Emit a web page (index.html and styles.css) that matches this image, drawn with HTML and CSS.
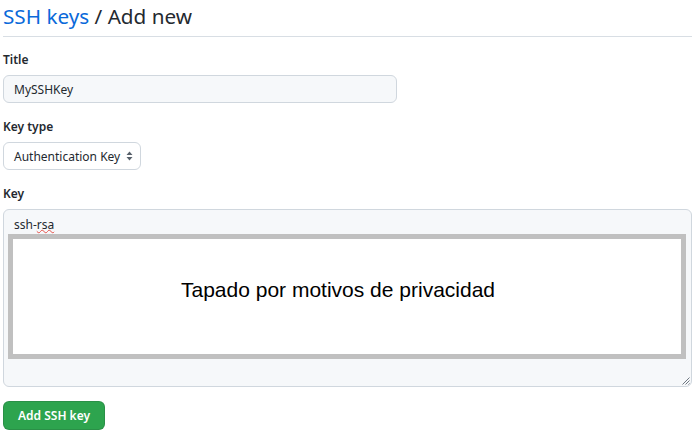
FILE: index.html
```html
<!DOCTYPE html>
<html lang="es">
<head>
<meta charset="utf-8">
<title>SSH keys / Add new</title>
<link rel="stylesheet" href="styles.css">
</head>
<body>
<div class="page">
  <h1 class="heading"><a class="crumb" href="#">SSH keys</a> / Add new</h1>
  <form class="form">
    <div class="group">
      <label class="label">Title</label>
      <div class="input">MySSHKey</div>
    </div>
    <div class="group">
      <label class="label">Key type</label>
      <div class="select">
        <span>Authentication Key</span>
        <svg class="arrows" width="7" height="10" viewBox="0 0 7 10"><path d="M3.5 0.5 L6.5 4 H0.5 Z M3.5 9.5 L6.5 6 H0.5 Z" fill="#57606a"/></svg>
      </div>
    </div>
    <div class="group">
      <label class="label">Key</label>
      <div class="textarea">
        <div class="ta-text">ssh-<span class="typo">rsa</span></div>
        <div class="cover"><span>Tapado por motivos de privacidad</span></div>
        <svg class="grip" width="9" height="9" viewBox="0 0 9 9"><path d="M8.5 1.5 L1.5 8.5 M8.5 4.5 L4.5 8.5 M8.5 7.5 L7.5 8.5" stroke="#6e7781" stroke-width="1"/></svg>
      </div>
    </div>
    <button class="btn" type="button">Add SSH key</button>
  </form>
</div>
</body>
</html>
```

FILE: styles.css
```css
html, body {
  margin: 0;
  padding: 0;
  background: #ffffff;
}
body {
  font-family: "Noto Sans", "Liberation Sans", sans-serif;
  font-size: 12px;
  color: #24292f;
}
.page {
  padding: 0 3px;
}
.heading {
  margin: 1px 0 0;
  padding-bottom: 5px;
  font-size: 20.7px;
  font-weight: 400;
  line-height: 30px;
  color: #24292f;
  border-bottom: 1px solid #d8dee4;
}
.crumb {
  color: #0969da;
  text-decoration: none;
}
.form {
  display: flex;
  flex-direction: column;
  padding-top: 12px;
}
.group {
  display: flex;
  flex-direction: column;
  gap: 5px;
  margin-bottom: 13px;
}
.label {
  font-weight: 600;
  font-size: 12px;
  line-height: 21px;
}
.input {
  width: 394px;
  height: 28px;
  box-sizing: border-box;
  border: 1px solid #d0d7de;
  border-radius: 6px;
  background: #f6f8fa;
  padding: 0 10px;
  display: flex;
  align-items: center;
  font-size: 12px;
}
.select {
  width: 138px;
  height: 28px;
  box-sizing: border-box;
  border: 1px solid #d0d7de;
  border-radius: 6px;
  background: #ffffff;
  padding: 0 7px 0 10px;
  display: flex;
  align-items: center;
  justify-content: space-between;
  white-space: nowrap;
  font-size: 12px;
}
.textarea {
  position: relative;
  height: 178px;
  box-sizing: border-box;
  border: 1px solid #d0d7de;
  border-radius: 6px;
  background: #f6f8fa;
  padding: 5px 10px;
}
.ta-text {
  line-height: 20px;
  font-size: 12px;
}
.typo {
  text-decoration: underline wavy #e5534b;
  text-decoration-thickness: 1px;
  text-underline-offset: 0;
}
.cover {
  position: absolute;
  left: 4px;
  top: 24px;
  width: 678px;
  height: 125px;
  box-sizing: border-box;
  border: 5px solid #c0c0c0;
  background: #ffffff;
  display: flex;
  align-items: center;
  padding: 0 0 14px 168px;
  font-family: "Liberation Sans", Arial, sans-serif;
  font-size: 21px;
  color: #000000;
}
.grip {
  position: absolute;
  right: 1px;
  bottom: 1px;
}
.btn {
  align-self: flex-start;
  margin-top: 1px;
  width: 102px;
  height: 29px;
  border: 1px solid rgba(27,31,36,0.15);
  border-radius: 6px;
  background: #2da44e;
  color: #ffffff;
  font-family: "Noto Sans", "Liberation Sans", sans-serif;
  font-size: 12px;
  font-weight: 600;
  padding: 0;
}
```
